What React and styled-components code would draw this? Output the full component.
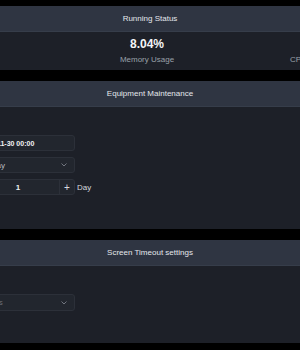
import React from "react"
import styled, { createGlobalStyle } from "styled-components"

const GlobalStyle = createGlobalStyle`
  html, body {
    margin: 0;
    background: #000;
    overflow: hidden;
    font-family: "Liberation Sans", Arial, sans-serif;
  }
`

const Page = styled.div`
  width: 300px;
  height: 350px;
  padding-top: 6px;
  box-sizing: border-box;
  display: flex;
  flex-direction: column;
  gap: 11px;
  overflow: hidden;
`

const Card = styled.section`
  flex: none;
  width: 600px;
  margin-left: -150px;
  background: #1d2028;
`

const CardHeader = styled.header`
  height: 26px;
  box-sizing: border-box;
  display: flex;
  align-items: center;
  justify-content: center;
  background: #2f3542;
  border-bottom: 1px solid #363d4a;
  color: #e4e7ec;
  font-size: 8px;
`

const StatsGrid = styled.div`
  display: grid;
  grid-template-columns: repeat(3, 164px);
  justify-content: center;
  padding: 5px 6px 5px 0;
`

const Stat = styled.div`
  display: flex;
  flex-direction: column;
  align-items: center;
  gap: 4px;
`

const StatValue = styled.div`
  color: #f4f5f7;
  font-size: 12px;
  font-weight: 700;
  line-height: 14px;
`

const StatLabel = styled.div`
  color: #9aa0a9;
  font-size: 8px;
  line-height: 10px;
`

const FormBody = styled.div`
  display: flex;
  flex-direction: column;
  gap: 6px;
  padding: ${p => p.$top}px 0 ${p => p.$bottom}px 10px;
`

const FormRow = styled.div`
  display: grid;
  grid-template-columns: 95px 114px auto;
  column-gap: 6px;
  align-items: center;
`

const Label = styled.label`
  color: #c9ccd2;
  font-size: 8px;
  text-align: right;
`

const Field = styled.div`
  height: ${p => p.$h || 16}px;
  box-sizing: border-box;
  display: flex;
  align-items: center;
  gap: 3px;
  padding: 0 7px 0 6px;
  background: #22262e;
  border: 1px solid #2c3039;
  border-radius: 3px;
  color: ${p => (p.$strong ? "#f1f2f4" : p.$muted ? "#6c717a" : "#b9bdc4")};
  font-size: ${p => (p.$strong ? 7 : 8)}px;
  font-weight: ${p => (p.$strong ? 700 : 400)};
`

const FieldText = styled.span`
  flex: 1;
  white-space: nowrap;
`

const Stepper = styled.div`
  height: 16px;
  box-sizing: border-box;
  display: grid;
  grid-template-columns: 15px 1fr 15px;
  background: #22262e;
  border: 1px solid #2c3039;
  border-radius: 3px;
  color: #eceef1;
  font-size: 8px;
`

const StepButton = styled.span`
  display: flex;
  align-items: center;
  justify-content: center;
  font-size: 10px;
  color: #d8dbe0;
  ${p => (p.$side === "left" ? "border-right" : "border-left")}: 1px solid #2c3039;
`

const StepValue = styled.span`
  display: flex;
  align-items: center;
  justify-content: center;
  font-weight: 700;
`

const Suffix = styled.span`
  margin-left: -4px;
  color: #d6d9de;
  font-size: 8px;
`

const Chevron = () => (
  <svg width="6" height="4" viewBox="0 0 6 4">
    <polyline points="0.5,0.5 3,3 5.5,0.5" fill="none" stroke="#858a94" strokeWidth="0.8" />
  </svg>
)

const CalendarIcon = () => (
  <svg width="8" height="8" viewBox="0 0 8 8">
    <rect x="0.5" y="1.5" width="7" height="6" rx="1" fill="none" stroke="#858a94" strokeWidth="0.8" />
    <line x1="0.5" y1="3.5" x2="7.5" y2="3.5" stroke="#858a94" strokeWidth="0.8" />
  </svg>
)

export default function App() {
  return (
    <>
      <GlobalStyle />
      <Page>
        <Card>
          <CardHeader>Running Status</CardHeader>
          <StatsGrid>
            <Stat>
              <StatValue>2d</StatValue>
              <StatLabel>Uptime</StatLabel>
            </Stat>
            <Stat>
              <StatValue>8.04%</StatValue>
              <StatLabel>Memory Usage</StatLabel>
            </Stat>
            <Stat>
              <StatValue>1%</StatValue>
              <StatLabel>CPU Usage</StatLabel>
            </Stat>
          </StatsGrid>
        </Card>

        <Card>
          <CardHeader>Equipment Maintenance</CardHeader>
          <FormBody $top={28} $bottom={34}>
            <FormRow>
              <Label>Restart Time</Label>
              <Field $strong>
                <CalendarIcon />
                <FieldText>2024-11-30 00:00</FieldText>
              </Field>
            </FormRow>
            <FormRow>
              <Label>Restart Mode</Label>
              <Field>
                <FieldText>Every Day</FieldText>
                <Chevron />
              </Field>
            </FormRow>
            <FormRow>
              <Label>Interval</Label>
              <Stepper>
                <StepButton $side="left">−</StepButton>
                <StepValue>1</StepValue>
                <StepButton $side="right">+</StepButton>
              </Stepper>
              <Suffix>Day</Suffix>
            </FormRow>
          </FormBody>
        </Card>

        <Card>
          <CardHeader>Screen Timeout settings</CardHeader>
          <FormBody $top={28} $bottom={32}>
            <FormRow>
              <Label>Timeout</Label>
              <Field $h={17} $muted>
                <FieldText>5 minutes</FieldText>
                <Chevron />
              </Field>
            </FormRow>
          </FormBody>
        </Card>
      </Page>
    </>
  )
}
